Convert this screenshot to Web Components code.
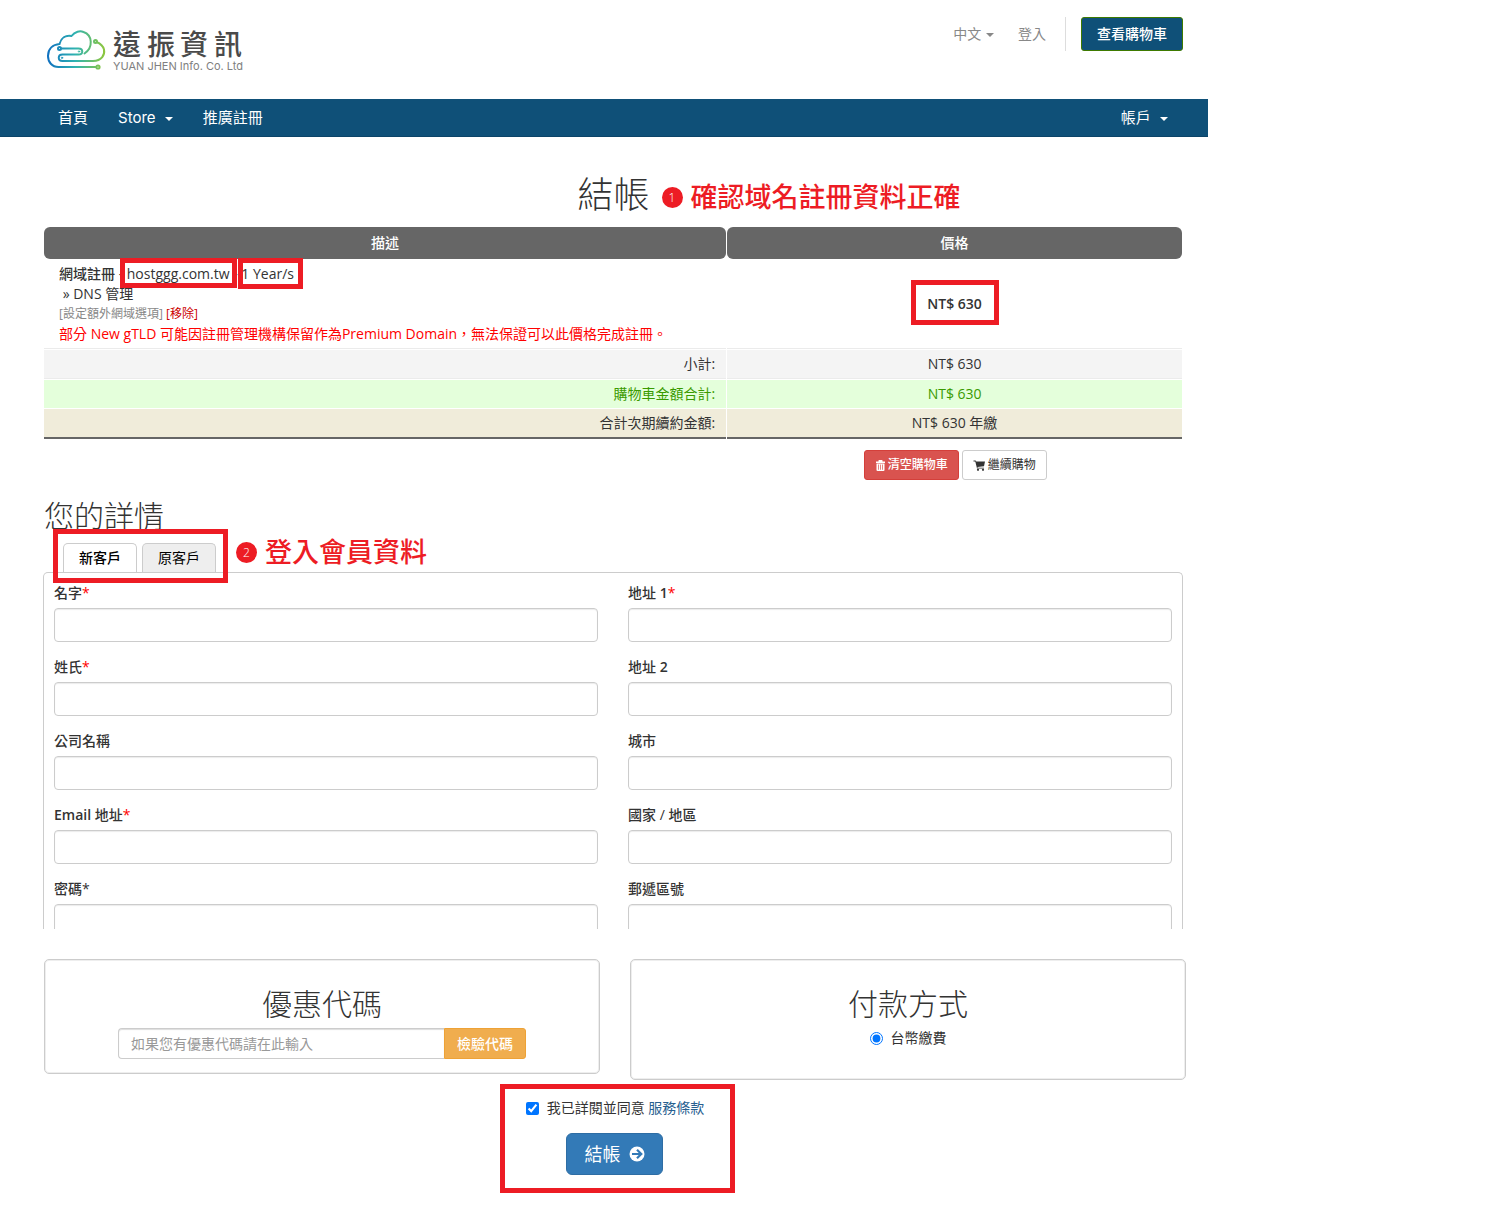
<!DOCTYPE html>
<html lang="zh-Hant">
<head>
<meta charset="utf-8">
<meta name="viewport" content="width=device-width, initial-scale=1">
<title>結帳</title>
<style>
  body {
    margin: 0;
    background: #fff;
    color: #333;
    font: 14px/20px "Open Sans", "Noto Sans CJK TC", sans-serif;
  }
</style>
</head>
<body>
<checkout-page></checkout-page>

<script>
const base = `
  *, ::before, ::after { box-sizing: border-box; }
  a { color: inherit; text-decoration: none; }
  button, input { font: inherit; margin: 0; }
  h1, h2 { margin: 0; font-weight: 300; }
  .caret {
    display: inline-block; vertical-align: middle;
    border: 4px solid transparent; border-top-color: currentColor; border-bottom: 0;
  }
`;

function define(name, html) {
  const template = document.createElement('template');
  template.innerHTML = html.replace('<style>', '<style>' + base);
  customElements.define(name, class extends HTMLElement {
    constructor() {
      super();
      this.attachShadow({ mode: 'open' }).append(template.content.cloneNode(true));
    }
  });
}

/* Red rectangle drawn around whatever it wraps; --inset sets its reach. */
define('red-frame', `
  <style>
    :host { display: inline-block; position: relative; }
    .line { position: absolute; inset: var(--inset, -10px); border: 5px solid #ed1c24; pointer-events: none; }
  </style>
  <slot></slot><span class="line"></span>`);

define('step-note', `
  <style>
    :host { display: flex; align-items: center; gap: 8px; color: #ed1c24; font-size: 27px; line-height: 32px; font-weight: 500; white-space: nowrap; }
    .dot { width: 21px; height: 21px; border-radius: 50%; background: #ed1c24; color: #fff; font-size: 12px; line-height: 21px; font-weight: 300; text-align: center; }
  </style>
  <span class="dot"><slot name="step"></slot></span><span><slot></slot></span>`);

define('brand-logo', `
  <style>
    :host { display: block; }
    svg { display: block; overflow: visible; }
  </style>
  <a href="#" aria-label="遠振資訊">
  <svg width="200" height="50" viewBox="0 0 200 50">
    <defs>
      <linearGradient id="g" gradientUnits="userSpaceOnUse" x1="3" y1="0" x2="60" y2="0">
        <stop offset="0" stop-color="#0f6fc0"/><stop offset=".5" stop-color="#2fb3b0"/><stop offset="1" stop-color="#8cc63f"/>
      </linearGradient>
    </defs>
    <g fill="none" stroke="url(#g)" stroke-width="2" stroke-linecap="round">
      <path d="M52 40H14.500C8 40 4 35 4 29C4 21.500 9 17.500 15.500 17C17 11 21.500 8 27.500 9C31 4.500 36 3.500 39.500 5C48.500 8 49.500 20.500 40.500 26.500"/>
      <path d="M17 21.500H34.500C39.500 21.500 39.500 27.500 34.500 27.500H18.500C13.500 27.500 13.500 34 18.500 34H49C58 34 61 27.500 60 22.500C59 18.500 56 16.500 52.500 15"/>
      <circle cx="15.500" cy="21.500" r="1.500"/>
      <circle cx="51.500" cy="14.500" r="1.500"/>
      <circle cx="54" cy="40" r="1.600"/>
      <g stroke-width="1"><circle cx="35" cy="24.500" r=".7"/><circle cx="18" cy="30.800" r=".7"/></g>
    </g>
    <text x="69 103 136 170" y="28" font-family="Lato, Noto Sans CJK TC, sans-serif" font-size="28" font-weight="500" fill="#4a4a4a">遠振資訊</text>
    <text x="69" y="43" font-family="Inter, sans-serif" font-size="11" fill="#808080">YUAN JHEN Info. Co. Ltd</text>
  </svg></a>`);

define('site-header', `
  <style>
    :host { display: flex; justify-content: space-between; align-items: flex-start; padding: 17px 25px 22px 44px; }
    brand-logo { margin-top: 10px; }
    nav { display: flex; align-items: center; color: #888; }
    nav a { margin-right: 24px; }
    nav a.login { margin-right: 19px; }
    nav .caret { margin-left: 1px; }
    .cart {
      color: #fff; background: #0f5078; border: 1px solid #3e7a00; border-radius: 3px;
      padding: 6px 15px; line-height: 20px; font-weight: 500;
    }
    .bar { border-left: 1px solid #ddd; padding-left: 15px; }
  </style>
  <brand-logo></brand-logo>
  <nav>
    <a href="#">中文 <span class="caret"></span></a>
    <a class="login" href="#">登入</a>
    <div class="bar"><button class="cart" type="button">查看購物車</button></div>
  </nav>`);

define('site-nav', `
  <style>
    :host { display: flex; justify-content: space-between; padding: 0 25px 0 43px; background: #0f5078; border-bottom: 1px solid #0c4468; color: #fff; font-family: Inter, "Noto Sans CJK TC", sans-serif; font-size: 15px; }
    div { display: flex; }
    a { padding: 9px 15px; line-height: 19px; }
    .caret { margin-left: 5px; }
  </style>
  <div><a href="#">首頁</a><a href="#">Store <span class="caret"></span></a><a href="#">推廣註冊</a></div>
  <a href="#">帳戶 <span class="caret"></span></a>`);

define('order-summary', `
  <style>
    :host { display: block; }
    table { width: calc(100% + 1px); margin-left: -1px; border-collapse: separate; border-spacing: 1px 0; table-layout: fixed; }
    th, td { padding: 4px 11px; }
    col.desc { width: 60%; }
    thead th { background: #666; color: #fff; padding: 6px 10px; border-radius: 6px; font-weight: 500; }
    tbody td { border-bottom: 1px solid #ebebeb; padding: 5px 15px 4px; text-align: center; }
    tbody td:first-child { text-align: left; }
    td div { height: 20px; white-space: nowrap; }
    .item-name { font-weight: 500; }
    .links { font-size: 12px; color: #888; }
    .links .remove { color: #c00; }
    .warn { color: #f00; }
    .price { font-weight: 600; }
    tfoot th { text-align: right; font-weight: 400; }
    tfoot td { text-align: center; }
    tfoot th, tfoot td { border-top: 1px solid #fff; background-clip: padding-box; }
    .sub > * { background-color: #f4f4f4; border-bottom: 1px solid #ebebeb; }
    .total > * { background-color: #e4ffdb; color: #3a9a00; }
    .renew > * { background-color: #f0ecda; border-bottom: 2px solid #666; }
    .domain { --inset: -6px -7px -4px -7px; }
    .term { --inset: -6px -9px -5px -3px; }
    .amount { --inset: -14px -17px -11px -16px; }
    .actions { display: flex; justify-content: center; gap: 3px; width: 40%; margin: 11px 0 0 60%; }
    .actions button {
      display: flex; align-items: center; gap: 2px; padding: 5px 10px; line-height: 18px; font-size: 12px;
      border: 1px solid #ccc; border-radius: 3px; background: #fff; color: #333;
    }
    .actions .danger { background: #d9534f; border-color: #d43f3a; color: #fff; font-weight: 500; }
  </style>
  <table>
    <colgroup><col class="desc"><col></colgroup>
    <thead><tr><th scope="col">描述</th><th scope="col">價格</th></tr></thead>
    <tbody><tr>
      <td>
        <div><span class="item-name">網域註冊</span> - <red-frame class="domain">hostggg.com.tw</red-frame> - <red-frame class="term">1 Year/s</red-frame></div>
        <div>&nbsp;» DNS 管理</div>
        <div class="links"><a href="#">[設定額外網域選項]</a> <a class="remove" href="#">[移除]</a></div>
        <div class="warn">部分 New gTLD 可能因註冊管理機構保留作為Premium Domain，無法保證可以此價格完成註冊。</div>
      </td>
      <td class="price"><red-frame class="amount">NT$ 630</red-frame></td>
    </tr></tbody>
    <tfoot>
      <tr class="sub"><th scope="row">小計:</th><td>NT$ 630</td></tr>
      <tr class="total"><th scope="row">購物車金額合計:</th><td>NT$ 630</td></tr>
      <tr class="renew"><th scope="row">合計次期續約金額:</th><td>NT$ 630 年繳</td></tr>
    </tfoot>
  </table>
  <div class="actions">
    <button class="danger" type="button">
      <svg width="11" height="11" viewBox="0 0 11 11" fill="currentColor"><path d="M1 1.500H3.500V.5Q3.500 0 4 0H7Q7.500 0 7.500.5V1.500H10V3H1zM1.500 3.500H9.500V10Q9.500 11 8.500 11H2.500Q1.500 11 1.500 10zM3.300 4.500V9.800H4V4.500zM5.200 4.500V9.800H5.900V4.500zM7 4.500V9.800H7.700V4.500z" fill-rule="evenodd"/></svg>
      清空購物車
    </button>
    <button type="button">
      <svg width="13" height="11" viewBox="0 0 13 11" fill="currentColor"><path d="M.5.5H2.600L3.300 1.500H12L11 6.300L4.400 7L4.600 7.800H11V8.600H4L2.300 1.500H.5z"/><circle cx="5" cy="9.800" r="1.100"/><circle cx="10" cy="9.800" r="1.100"/></svg>
      繼續購物
    </button>
  </div>`);

/* A label with its text box; the "clipped" attribute shows only the top of the box. */
customElements.define('form-field', class extends HTMLElement {
  connectedCallback() {
    if (this.shadowRoot) return;
    const mark = this.getAttribute('mark');
    const star = mark ? `<span class="${mark}">*</span>` : '';
    const label = this.getAttribute('label').replace(/[A-Za-z0-9]+/g, '<b>$&</b>');
    this.attachShadow({ mode: 'open' }).innerHTML = `
      <style>${base}
        :host { display: block; }
        label { display: block; margin-bottom: 5px; font-weight: 500; }
        b { font-weight: 600; }
        .red { color: #f00; }
        .box { height: 34px; overflow: hidden; }
        :host([clipped]) .box { height: 25px; }
        input { display: block; width: 100%; height: 34px; padding: 6px 12px; border: 1px solid #ccc; border-radius: 4px; box-shadow: inset 0 1px 1px rgba(0,0,0,.08); }
      </style>
      <label for="f">${label}${star}</label>
      <div class="box"><input id="f" type="${this.getAttribute('type') || 'text'}"></div>`;
  }
});

define('customer-details', `
  <style>
    :host { display: block; }
    h2 { font-size: 30px; line-height: 33px; }
    .top { display: flex; align-items: flex-start; margin-top: 11px; padding-left: 19px; }
    .tabs { display: flex; gap: 5px; }
    .tabs button { padding: 4px 15px; width: 74px; height: 29px; line-height: 20px; border: 1px solid #ccc; border-bottom: 0; border-radius: 5px 5px 0 0; background: #eee; color: #000; white-space: nowrap; }
    .tabs .on { background: #fff; font-weight: 500; }
    red-frame { --inset: -14px -12px -11px -10px; z-index: 1; }
    step-note { margin: -7px 0 0 20px; height: 32px; }
    form { display: grid; grid-template-columns: 1fr 1fr; gap: 15px 30px; margin-left: -1px; padding: 10px 10px 0; border: 1px solid #ccc; border-bottom: 0; border-radius: 5px 5px 0 0; }
  </style>
  <h2>您的詳情</h2>
  <div class="top">
    <red-frame><div class="tabs" role="tablist">
      <button class="on" role="tab" aria-selected="true" type="button">新客戶</button>
      <button role="tab" aria-selected="false" type="button">原客戶</button>
    </div></red-frame>
    <step-note><span slot="step">2</span>登入會員資料</step-note>
  </div>
  <form>
    <form-field label="名字" mark="red"></form-field>
    <form-field label="地址 1" mark="red"></form-field>
    <form-field label="姓氏" mark="red"></form-field>
    <form-field label="地址 2"></form-field>
    <form-field label="公司名稱"></form-field>
    <form-field label="城市"></form-field>
    <form-field label="Email 地址" mark="red" type="email"></form-field>
    <form-field label="國家 / 地區"></form-field>
    <form-field label="密碼" mark="plain" type="password" clipped></form-field>
    <form-field label="郵遞區號" clipped></form-field>
  </form>`);

define('info-card', `
  <style>
    :host { display: block; padding: 27px 73px 14px; border: 1px solid #ccc; border-radius: 5px; box-shadow: inset 0 0 0 1px #eee; text-align: center; }
    h2 { font-size: 30px; line-height: 33px; margin-bottom: 8px; }
  </style>
  <h2><slot name="title"></slot></h2><slot></slot>`);

define('promo-form', `
  <style>
    :host { display: flex; }
    input { flex: 1; min-width: 0; height: 31px; padding: 4px 12px; border: 1px solid #ccc; box-shadow: inset 0 1px 1px #ddd; border-right: 0; border-radius: 4px 0 0 4px; color: #555; }
    input::placeholder { color: #999; opacity: 1; }
    button { height: 31px; padding: 4px 12px; border: 1px solid #eea236; border-radius: 0 3px 3px 0; background: #f0ad4e; color: #fff; font-weight: 500; }
  </style>
  <input type="text" aria-label="優惠代碼" placeholder="如果您有優惠代碼請在此輸入">
  <button type="button">檢驗代碼</button>`);

define('payment-options', `
  <style>
    :host { display: flex; justify-content: center; padding-bottom: 17px; }
    label { display: flex; align-items: center; gap: 8px; }
    input { width: 13px; height: 13px; accent-color: #0075ff; }
  </style>
  <label><input type="radio" name="pay" checked>台幣繳費</label>`);

define('order-submit', `
  <style>
    :host { display: flex; justify-content: center; }
    red-frame { --inset: -14px -31px -18px -26px; }
    .stack { display: flex; flex-direction: column; align-items: center; gap: 15px; }
    .agree { display: flex; align-items: center; gap: 8px; }
    input { width: 13px; height: 13px; accent-color: #0075ff; }
    .agree a { color: #286090; }
    button { display: flex; align-items: center; gap: 9px; height: 42px; padding: 0 17px; border: 1px solid #2e6da4; border-radius: 6px; background: #337ab7; color: #fff; font-size: 18px; line-height: 24px; }
  </style>
  <red-frame><div class="stack">
    <div class="agree"><input id="tos" type="checkbox" checked><label for="tos">我已詳閱並同意 <a href="#">服務條款</a></label></div>
    <button type="submit">結帳
      <svg width="16" height="16" viewBox="0 0 16 16"><circle cx="8" cy="8" r="7.500" fill="#fff"/><path d="M3 8H12M8 3.700L12.300 8L8 12.300" fill="none" stroke="#337ab7" stroke-width="2.200"/></svg>
    </button>
  </div></red-frame>`);

define('checkout-page', `
  <style>
    :host { display: block; max-width: 1208px; padding-bottom: 45px; }
    main { padding: 0 25px 0 44px; }
    .title { display: flex; justify-content: center; padding: 38px 0 12px; }
    .title div { position: relative; }
    h1 { font-size: 36px; line-height: 40px; }
    .title step-note { position: absolute; left: 100%; top: 6px; margin-left: 12px; }
    customer-details { margin-top: 19px; }
    .cards { display: grid; grid-template-columns: 1fr 1fr; align-items: start; gap: 30px; margin: 30px -3px 0 0; }
    order-submit { margin: 18px -3px 0 0; }
  </style>
  <site-header></site-header>
  <site-nav></site-nav>
  <main>
    <div class="title"><div><h1>結帳</h1><step-note><span slot="step">1</span>確認域名註冊資料正確</step-note></div></div>
    <order-summary></order-summary>
    <customer-details></customer-details>
    <div class="cards">
      <info-card><span slot="title">優惠代碼</span><promo-form></promo-form></info-card>
      <info-card><span slot="title">付款方式</span><payment-options></payment-options></info-card>
    </div>
    <order-submit></order-submit>
  </main>`);
</script>
</body>
</html>
